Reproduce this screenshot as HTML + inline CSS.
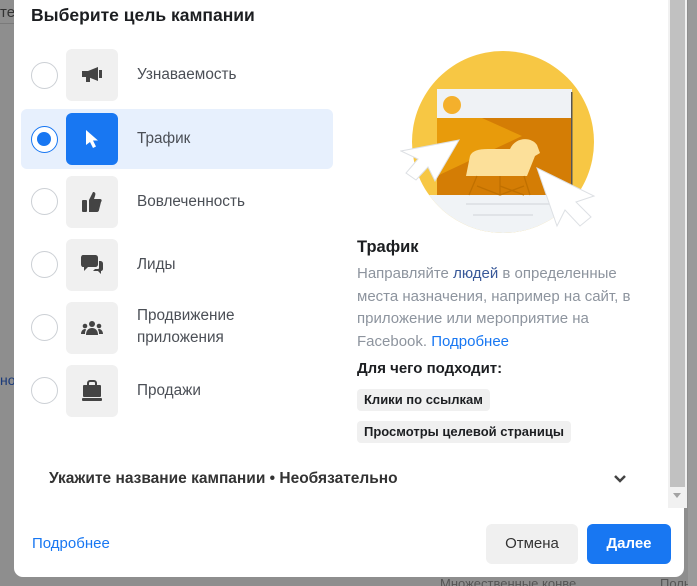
<!DOCTYPE html>
<html><head><meta charset="utf-8"><style>
*{margin:0;padding:0;box-sizing:border-box}
html,body{width:697px;height:586px;overflow:hidden}
body{background:#8e8e8e;font-family:"Liberation Sans","Noto Sans CJK SC",sans-serif;position:relative}
.abs{position:absolute}
.modal{position:absolute;left:14px;top:-10px;width:670px;height:587px;background:#fff;border-radius:0 0 9px 9px}
.title{left:31px;top:5px;font-size:17.5px;font-weight:bold;color:#1c1e21}
.row{position:absolute;left:21px;width:312px;height:60px;border-radius:6px}
.radio{position:absolute;left:10px;width:27px;height:27px;border:1px solid #ccd0d5;border-radius:50%;background:#fff}
.ib{position:absolute;left:45px;width:52px;height:52px;border-radius:6px;background:#f0f0f0;display:flex;align-items:center;justify-content:center}
.lbl{position:absolute;left:116px;font-size:15.3px;color:#4b4f56;line-height:22px}
.tag{position:absolute;left:357px;background:#f0f0f0;border-radius:4px;font-size:13px;font-weight:bold;color:#1c1e21;padding:0 7px;height:22px;line-height:22px}
</style></head><body>
<div class="abs" style="left:0;top:4px;font-size:15px;color:#333">те</div>
<div class="abs" style="left:0;top:23px;width:14px;height:1px;background:#7a7a7a"></div>
<div class="abs" style="left:0;top:372px;font-size:14px;color:#1a3a7a">нои</div>
<div class="abs" style="left:440px;top:576px;font-size:13px;color:#555">Множественные конве</div>
<div class="abs" style="left:660px;top:576px;font-size:13px;color:#555">Польз</div>
<div class="abs" style="left:688px;top:0;width:9px;height:586px;background:#9a9a9a"></div>
<div class="modal"></div>
<div class="abs title">Выберите цель кампании</div>

<div class="row" style="top:45px"><div class="radio" style="top:17px"></div><div class="ib" style="top:4px">
<svg width="22" height="18" viewBox="0 0 22 18"><path d="M1 5h6l10-4v14L7 11H1z" fill="#444"/><rect x="5" y="11" width="4" height="5" fill="#444"/><rect x="18" y="4" width="3" height="8" fill="#444"/></svg></div><div class="lbl" style="top:19px">Узнаваемость</div></div>

<div class="row" style="top:109px;background:#e7f0fd"><div class="radio" style="top:17px;border:1.5px solid #1877f2"><div style="position:absolute;left:5px;top:5px;width:14px;height:14px;border-radius:50%;background:#1877f2"></div></div><div class="ib" style="top:4px;background:#1877f2">
<svg width="16" height="20" viewBox="0 0 16 20"><path d="M2 1v15l4-3 3 6 3-1.5-3-6h5z" fill="#fff"/></svg></div><div class="lbl" style="top:19px">Трафик</div></div>

<div class="row" style="top:171px"><div class="radio" style="top:17px"></div><div class="ib" style="top:5px">
<svg width="22" height="22" viewBox="0 0 22 22"><rect x="1" y="9" width="5" height="12" rx="1" fill="#444"/><path d="M8 9l4-8c2 0 3 1 2 4l-1 3h6c2 0 2 2 1 3l-2 8c0 1-1 2-2 2H8z" fill="#444"/></svg></div><div class="lbl" style="top:20px">Вовлеченность</div></div>

<div class="row" style="top:234px"><div class="radio" style="top:17px"></div><div class="ib" style="top:5px">
<svg width="24" height="22" viewBox="0 0 24 22"><path d="M3 1h12c2 0 3 1 3 3v6c0 2-1 3-3 3H8l-4 4v-4H3c-1 0-2-1-2-3V4c0-2 1-3 2-3z" fill="#444"/><path d="M19 7h1c2 0 3 1 3 3v5c0 1-1 2-2 2v3l-3-3h-5l2-2h3c1 0 1-1 1-2z" fill="#444"/></svg></div><div class="lbl" style="top:20px">Лиды</div></div>

<div class="row" style="top:297px"><div class="radio" style="top:17px"></div><div class="ib" style="top:5px">
<svg width="24" height="16" viewBox="0 0 24 16"><circle cx="12" cy="4" r="3" fill="#444"/><circle cx="5" cy="6" r="2.3" fill="#444"/><circle cx="19" cy="6" r="2.3" fill="#444"/><path d="M6 15c0-5 3-7 6-7s6 2 6 7z" fill="#444"/><path d="M1 14c0-3 2-5 4-5 1 0 1 1 1 1-1 1-1 3-1 4z" fill="#444"/><path d="M23 14c0-3-2-5-4-5-1 0-1 1-1 1 1 1 1 3 1 4z" fill="#444"/></svg></div><div class="lbl" style="top:8px">Продвижение<br>приложения</div></div>

<div class="row" style="top:360px"><div class="radio" style="top:17px"></div><div class="ib" style="top:5px">
<svg width="22" height="22" viewBox="0 0 22 22"><path d="M7 5V3c0-1 1-2 2-2h4c1 0 2 1 2 2v2" stroke="#444" stroke-width="2" fill="none"/><rect x="2" y="5" width="18" height="12" rx="1" fill="#444"/><rect x="1" y="18" width="20" height="3" rx="1" fill="#444"/></svg></div><div class="lbl" style="top:20px">Продажи</div></div>

<svg class="abs" style="left:400px;top:48px" width="210" height="192" viewBox="0 0 210 192">
<defs><clipPath id="c"><circle cx="103" cy="94" r="91"/></clipPath></defs>
<circle cx="103" cy="94" r="91" fill="#f7c744"/>
<g clip-path="url(#c)">
<rect x="37" y="41" width="135" height="29" fill="#eff2f5"/>
<rect x="37" y="70" width="135" height="77" fill="#d47d05"/>
<path d="M37 70h45l40 18-85 40z" fill="#e89b0b"/>
<rect x="0" y="147" width="210" height="50" fill="#f0f3f6"/>
<path d="M66 156h100M73 167h60" stroke="#d6d9de" stroke-width="1.2"/>
</g>
<rect x="171" y="44" width="1.5" height="103" fill="#555"/>
<circle cx="52" cy="57" r="9" fill="#f4b02c"/>
<path d="M66 128l4-20c2-5 8-7 18-7h22c6-13 22-12 27-4l3 8-5 3-8 20z" fill="#fce09a"/>
<path d="M77 128l-8 19M100 128v19M124 128l6 19M77 138l23 9M100 138l24 9M100 147l24-9" stroke="#c07000" stroke-width="1.3"/>
<path d="M59 92L1 103l17 8-12 14 10 7 12-13 7 14z" fill="#fff" stroke="#dde0e4"/>
<path d="M137 120l20 58 8-16 15 16 11-9-15-15 18-6z" fill="#fff" stroke="#dde0e4"/>
</svg>

<div class="abs" style="left:357px;top:238px;font-size:16.5px;font-weight:bold;color:#1c1e21">Трафик</div>
<div class="abs" style="left:357px;top:263px;width:300px;font-size:15px;line-height:22.5px;color:#8d949e">Направляйте <span style="color:#385898">людей</span> в определенные места назначения, например на сайт, в приложение или мероприятие на Facebook. <span style="color:#1877f2">Подробнее</span></div>
<div class="abs" style="left:357px;top:360px;font-size:15px;font-weight:bold;color:#1c1e21">Для чего подходит:</div>
<div class="tag" style="top:389px">Клики по ссылкам</div>
<div class="tag" style="top:421px">Просмотры целевой страницы</div>

<div class="abs" style="left:49px;top:470px;font-size:15.5px;font-weight:bold;color:#333">Укажите название кампании • Необязательно</div>
<svg class="abs" style="left:613px;top:474px" width="14" height="10" viewBox="0 0 14 10"><path d="M2 2l5 5 5-5" stroke="#444" stroke-width="2.5" fill="none"/></svg>

<div class="abs" style="left:668px;top:0;width:19px;height:508px;background:#f1f1f1"></div>
<div class="abs" style="left:670px;top:0;width:15px;height:487px;background:#c1c1c1"></div>
<div class="abs" style="left:673px;top:493px;width:0;height:0;border-left:4.5px solid transparent;border-right:4.5px solid transparent;border-top:5px solid #a3a3a3"></div>

<div class="abs" style="left:32px;top:535px;font-size:15px;color:#1877f2">Подробнее</div>
<div class="abs" style="left:486px;top:524px;width:92px;height:40px;border-radius:6px;background:#f0f0f0;font-size:15px;color:#333;text-align:center;line-height:40px">Отмена</div>
<div class="abs" style="left:587px;top:524px;width:84px;height:40px;border-radius:6px;background:#1877f2;font-size:15px;font-weight:bold;color:#fff;text-align:center;line-height:40px">Далее</div>
</body></html>
